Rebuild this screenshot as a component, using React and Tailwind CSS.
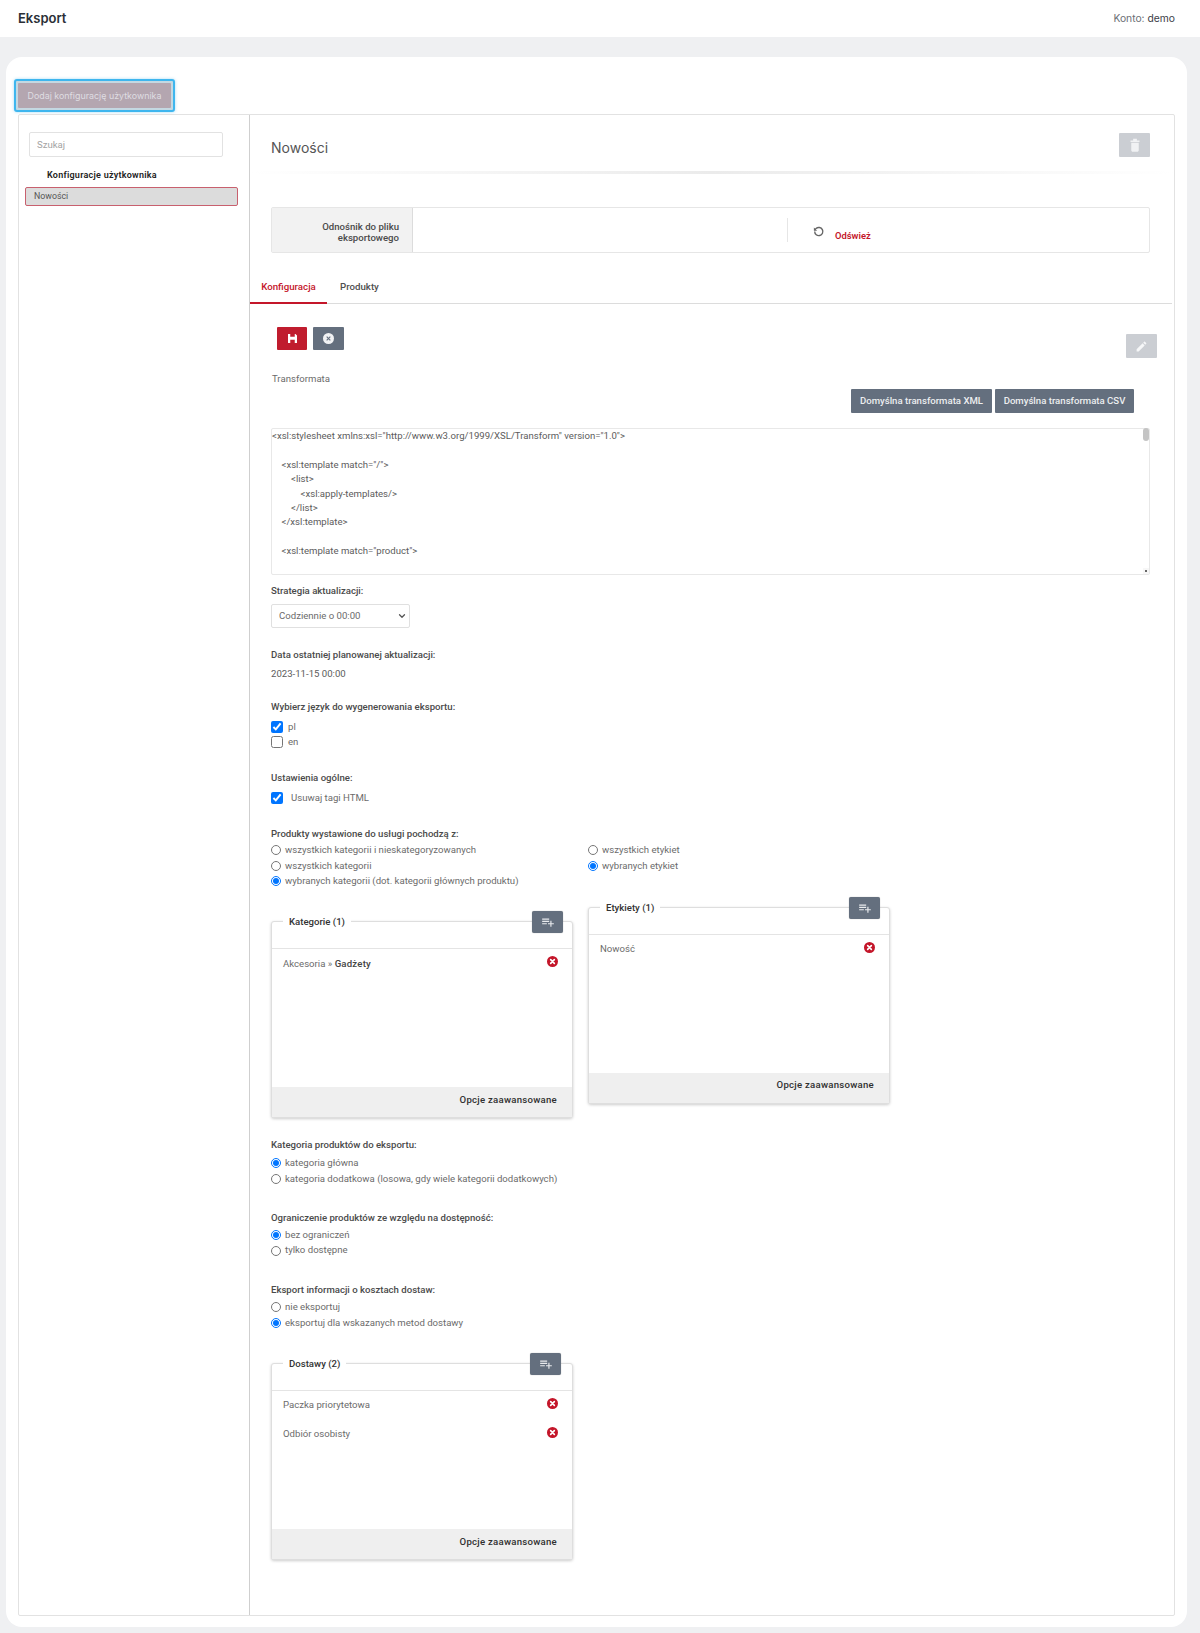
import React from 'react';
import { ChevronDown } from 'lucide-react';

const xslt = `<xsl:stylesheet xmlns:xsl="http://www.w3.org/1999/XSL/Transform" version="1.0">

    <xsl:template match="/">
        <list>
            <xsl:apply-templates/>
        </list>
    </xsl:template>

    <xsl:template match="product">

        <xsl:variable name="id" select="@id"/>
`;

function Label({ children, className = '' }) {
  return <div className={`h-4 leading-4 text-[9.6px] font-medium text-[#4a4a4a] ${className}`}>{children}</div>;
}

function Radio({ label, checked }) {
  return (
    <label className="flex items-center h-[15.8px] text-[9.6px] text-[#6b6b6b]">
      <input type="radio" readOnly checked={!!checked} className="w-[10px] h-[10px] m-0 mr-[4px] shrink-0" />
      {label}
    </label>
  );
}

function RemoveIcon() {
  return (
    <svg viewBox="0 0 12 12" className="w-[11px] h-[11px]">
      <circle cx="6" cy="6" r="6" fill="#c4162a" />
      <path d="M4 4l4 4M8 4l-4 4" stroke="#fff" strokeWidth="1.8" strokeLinecap="round" />
    </svg>
  );
}

function PickerBox({ title, items, right = 'right-[9px]', className = '' }) {
  return (
    <div className={`relative w-[302px] h-[197px] flex flex-col border border-[#dedede] rounded-[3px] bg-white shadow-[0_1px_3px_rgba(0,0,0,0.2)] ${className}`}>
      <div className="absolute left-[11px] -top-2 px-[6px] h-4 leading-4 bg-white text-[9.6px] font-medium text-[#333]">{title}</div>
      <button className={`absolute -top-[11px] ${right} w-[31px] h-[22px] bg-[#646f7e] rounded-[2px] flex items-center justify-center shadow-[0_0_1px_rgba(0,0,0,0.4)]`}>
        <svg viewBox="0 0 24 24" className="w-[14px] h-[14px]" fill="#e8eaed">
          <path d="M14 10H2v2h12v-2zm0-4H2v2h12V6zm4 8v-4h-2v4h-4v2h4v4h2v-4h4v-2h-4zM2 16h8v-2H2v2z" />
        </svg>
      </button>
      <div className="h-[27px] border-b border-[#e4e4e4] shrink-0" />
      <div className="flex-1">
        {items.map((item, i) => (
          <div key={i} className="h-[29px] flex items-center justify-between pl-[11px] pr-[14px] text-[9.6px] text-[#6b6b6b]">
            <span>{item}</span>
            <span className="-mt-1"><RemoveIcon /></span>
          </div>
        ))}
      </div>
      <div className="h-[30px] shrink-0 bg-[#efefef] flex items-center justify-end pr-[15px] pb-[4px] text-[9.6px] font-medium text-[#2f2f2f] tracking-[0.25px]">Opcje zaawansowane</div>
    </div>
  );
}

export default function App() {
  return (
    <div className="min-h-[1633px] bg-[#eff0f2] font-['Roboto',sans-serif]">
      <header className="h-[37px] bg-white flex items-center justify-between pl-[18px] pr-[25px] font-['Inter',sans-serif]">
        <h1 className="text-[13px] font-semibold text-[#2b2f36]">Eksport</h1>
        <div className="text-[10.3px] text-[#6b6f76]">Konto: <span className="text-[#3c4047]">demo</span></div>
      </header>

      <div className="mt-[20px] ml-[6px] w-[1181px] h-[1570px] bg-white rounded-[16px] pt-[22px] pl-[8px]">
        <button className="block w-[161px] h-[33px] border-2 border-[#3fb6ee] rounded-[3px] bg-[#c4d8e2] p-[2px] shadow-[0_0_3px_rgba(63,182,238,0.5)]">
          <span className="block h-full bg-[#b4a6b0] rounded-[1px] leading-[25px] text-[8.9px] whitespace-nowrap text-[#dfdde2] font-['Inter',sans-serif]">Dodaj konfigurację użytkownika</span>
        </button>

        <div className="ml-[4px] mt-[2px] w-[1157px] h-[1502px] flex border border-[#e2e2e2] rounded-[2px]">
          <aside className="w-[231px] shrink-0 border-r border-[#cfcfcf] pt-[17px]">
            <input
              readOnly
              placeholder="Szukaj"
              className="block ml-[10px] w-[194px] h-[25px] border border-[#e2e2e2] rounded-[2px] px-[7px] text-[9.6px] text-[#555] placeholder:text-[#a3a3a3] outline-none"
            />
            <div className="mt-[10px] pl-[28px] h-4 leading-4 text-[9px] font-semibold text-[#222] tracking-[0.25px]">Konfiguracje użytkownika</div>
            <div className="mt-[4px] ml-[6px] w-[213px] h-[19px] leading-[17px] bg-[#dcdcdc] border border-[#c8606e] rounded-[2px] pl-[8px] text-[8.8px] text-[#555]">Nowości</div>
          </aside>

          <main className="flex-1 min-w-0 relative">
            <div className="h-[56px] pl-[21px] pr-[24px] flex items-start justify-between">
              <h2 className="mt-[21px] text-[14px] leading-6 text-[#555] font-['Inter',sans-serif]">Nowości</h2>
              <button className="mt-[18px] w-[31px] h-[24px] bg-[#cbced3] rounded-[1px] flex items-center justify-center">
                <svg viewBox="0 0 24 24" className="w-[18px] h-[18px]" fill="#f1f2f4">
                  <path d="M7 19c0 1.100.9 2 2 2h6c1.100 0 2-.9 2-2V9H7v10zM18 6h-3.500V3.500h-5V6H6v2h12V6z" />
                </svg>
              </button>
            </div>
            <div className="h-[3px] bg-gradient-to-r from-white via-[#ebebeb] to-white" />

            <div className="ml-[21px] mt-[33px] w-[879px] h-[46px] flex border border-[#e6e6e6] rounded-[2px]">
              <div className="w-[141px] shrink-0 bg-[#f2f2f2] border-r border-[#dcdcdc] flex items-center justify-end text-right pr-[13px] pt-[4px] text-[9.6px] leading-[11.5px] font-medium text-[#4a4a4a]">
                Odnośnik do pliku<br />eksportowego
              </div>
              <div className="flex-1 flex items-center">
                <div className="ml-[374px] w-px h-[24px] bg-[#e6e6e6]" />
                <svg viewBox="0 0 24 24" className="ml-[24px] mt-[3px] w-[13px] h-[13px]" fill="none" stroke="#666" strokeWidth="2.600">
                  <path d="M5 12a7.500 7.500 0 1 0 2.500-5.500L4.500 9" />
                  <path d="M3.500 4.500v6h6" fill="#666" stroke="none" />
                </svg>
                <span className="ml-[10px] mt-[13px] text-[9.4px] font-semibold text-[#c4162a]">Odśwież</span>
              </div>
            </div>

            <div className="mt-[17px] h-[34px] mr-[2px] flex border-b border-[#dcdcdc] text-[9.7px] font-medium">
              <div className="w-[77px] h-[34px] border-b-2 border-[#c4162a] text-center leading-[33px] text-[#c4162a]">Konfiguracja</div>
              <div className="ml-[13px] leading-[33px] text-[#4f4f4f]">Produkty</div>
            </div>

            <div className="relative pl-[27px] pt-[23px] flex gap-[6px]">
              <button className="w-[30px] h-[23px] bg-[#c01c2e] rounded-[1px] flex items-center justify-center">
                <svg viewBox="0 0 10 10" className="w-[9px] h-[9px]" fill="#fff">
                  <path d="M0 0h2.500v3h5V0h.800L10 1.700V10H7.500V6.500h-5V10H0z" />
                </svg>
              </button>
              <button className="w-[31px] h-[23px] bg-[#646f7e] rounded-[1px] flex items-center justify-center">
                <svg viewBox="0 0 12 12" className="w-[11px] h-[11px]">
                  <circle cx="6" cy="6" r="6" fill="#f1f2f4" />
                  <path d="M4 4l4 4M8 4l-4 4" stroke="#646f7e" strokeWidth="1.200" />
                </svg>
              </button>
              <button className="absolute right-[17px] top-[30px] w-[31px] h-[24px] bg-[#cbced3] rounded-[1px] flex items-center justify-center">
                <svg viewBox="0 0 24 24" className="w-[13px] h-[13px]" fill="#f6f7f8">
                  <path d="M3 17.250V21h3.750L17.810 9.940l-3.750-3.750L3 17.250zM20.710 7.040c.39-.39.39-1.020 0-1.410l-2.340-2.340c-.39-.39-1.020-.39-1.410 0l-1.830 1.830 3.750 3.750 1.830-1.830z" />
                </svg>
              </button>
            </div>

            <div className="pl-[22px] mt-[21px] h-4 leading-4 text-[9.6px] text-[#6b6b6b]">Transformata</div>

            <div className="mt-[2px] mr-[40px] flex justify-end gap-[3px]">
              <button className="w-[141px] h-[24px] bg-[#646f7e] rounded-[1px] text-[9.6px] font-medium text-[#eceef0]">Domyślna transformata XML</button>
              <button className="w-[139px] h-[24px] bg-[#646f7e] rounded-[1px] text-[9.6px] font-medium text-[#eceef0]">Domyślna transformata CSV</button>
            </div>

            <div className="pl-[21px] pt-[15px]">
              <div className="relative w-[879px] h-[147px]">
                <textarea
                  readOnly
                  value={xslt}
                  className="block w-full h-full border border-[#e8e8e8] rounded-[2px] resize-none p-0 text-[9.6px] leading-[14.4px] text-[#5c5c5c] whitespace-pre overflow-hidden outline-none"
                />
                <div className="absolute right-px top-0 w-[6px] h-[13px] rounded-[3px] bg-[#c4c4c4]" />
                <div className="absolute right-px bottom-px w-[6px] h-[6px] bg-[#f7f7f7] flex items-center justify-center">
                  <div className="w-[2px] h-[2px] bg-[#666]" />
                </div>
              </div>

              <Label className="mt-[8px]">Strategia aktualizacji:</Label>
              <div className="relative mt-[5px] w-[139px] h-[24px]">
                <select className="block w-full h-full appearance-none border border-[#e0e0e0] rounded-[2px] pl-[7px] text-[9.6px] text-[#6b6b6b] bg-white outline-none">
                  <option>Codziennie o 00:00</option>
                </select>
                <ChevronDown className="absolute right-[3px] top-[7px] w-[10px] h-[10px] text-[#555] pointer-events-none" strokeWidth={3} />
              </div>

              <Label className="mt-[19px]">Data ostatniej planowanej aktualizacji:</Label>
              <div className="mt-[3px] h-4 leading-4 text-[9.6px] text-[#5c5c5c]">2023-11-15 00:00</div>

              <Label className="mt-[17px]">Wybierz język do wygenerowania eksportu:</Label>
              <label className="mt-[4px] flex items-center h-[15px] text-[9.6px] text-[#6b6b6b]">
                <input type="checkbox" readOnly checked className="w-[12px] h-[12px] m-0 mr-[5px]" /><span className="mt-[2px]">pl</span>
              </label>
              <label className="flex items-center h-[15px] text-[9.6px] text-[#6b6b6b]">
                <input type="checkbox" readOnly className="w-[12px] h-[12px] m-0 mr-[5px]" /><span className="mt-[2px]">en</span>
              </label>

              <Label className="mt-[21px]">Ustawienia ogólne:</Label>
              <label className="mt-[4px] flex items-center h-[15px] text-[9.6px] text-[#6b6b6b]">
                <input type="checkbox" readOnly checked className="w-[12px] h-[12px] m-0 mr-[8px]" /><span className="mt-[2px]">Usuwaj tagi HTML</span>
              </label>

              <Label className="mt-[21px]">Produkty wystawione do usługi pochodzą z:</Label>
              <div className="flex gap-[15px] items-start">
                <div className="w-[302px]">
                  <Radio label="wszystkich kategorii i nieskategoryzowanych" />
                  <Radio label="wszystkich kategorii" />
                  <Radio checked label="wybranych kategorii (dot. kategorii głównych produktu)" />
                  <PickerBox
                    className="mt-[32px]"
                    title="Kategorie (1)"
                    items={[<>Akcesoria » <b className="font-medium text-[#444] tracking-[0.2px]">Gadżety</b></>]}
                  />
                </div>
                <div className="w-[302px]">
                  <Radio label="wszystkich etykiet" />
                  <Radio checked label="wybranych etykiet" />
                  <PickerBox className="mt-[33px]" title="Etykiety (1)" items={['Nowość']} />
                </div>
              </div>

              <Label className="mt-[19px]">Kategoria produktów do eksportu:</Label>
              <div className="mt-[2px]">
                <Radio checked label="kategoria główna" />
                <Radio label="kategoria dodatkowa (losowa, gdy wiele kategorii dodatkowych)" />
              </div>

              <Label className="mt-[23px]">Ograniczenie produktów ze względu na dostępność:</Label>
              <div className="mt-[1px]">
                <Radio checked label="bez ograniczeń" />
                <Radio label="tylko dostępne" />
              </div>

              <Label className="mt-[23px]">Eksport informacji o kosztach dostaw:</Label>
              <div className="mt-[2px]">
                <Radio label="nie eksportuj" />
                <Radio checked label="eksportuj dla wskazanych metod dostawy" />
              </div>

              <PickerBox className="mt-[32px]" title="Dostawy (2)" right="right-[11px]" items={['Paczka priorytetowa', 'Odbiór osobisty']} />
            </div>
          </main>
        </div>
      </div>
    </div>
  );
}
